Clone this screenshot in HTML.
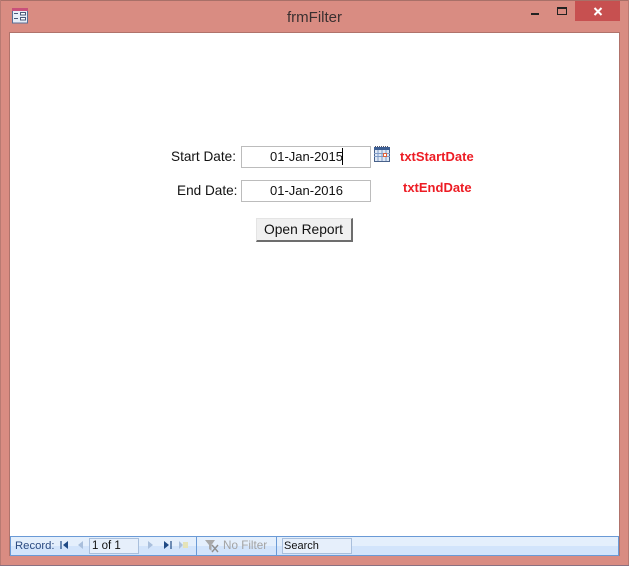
<!DOCTYPE html>
<html>
<head>
<meta charset="utf-8">
<style>
html,body{margin:0;padding:0;}
body{width:629px;height:566px;position:relative;overflow:hidden;background:#d98c82;font-family:"Liberation Sans",sans-serif;}
.a{position:absolute;}
.t{position:absolute;white-space:nowrap;line-height:16px;}
.lab{font-size:13.6px;color:#111;}
.inp{position:absolute;background:#fff;border:1px solid #bcbcbc;box-sizing:border-box;width:130px;height:22px;left:241px;}
.val{font-size:13px;color:#111;}
.red{font-size:13px;font-weight:bold;color:#ed1c24;}
</style>
</head>
<body>
<div class="a" style="left:0;top:0;width:629px;height:1px;background:#a87068"></div>
<div class="a" style="left:0;top:0;width:1px;height:566px;background:#b87a72"></div>
<div class="a" style="left:628px;top:0;width:1px;height:566px;background:#b87a72"></div>
<div class="a" style="left:0;top:565px;width:629px;height:1px;background:#8a7080"></div>

<!-- title icon -->
<svg class="a" style="left:12px;top:8px" width="16" height="16" viewBox="0 0 16 16">
<rect x="0.5" y="0.5" width="15" height="14.5" fill="#e8eef8" stroke="#5a6f96"/>
<rect x="0" y="0" width="16" height="3" fill="#c9507a"/>
<path d="M2 5.5h4M2 10.5h4" stroke="#4a5a7a" stroke-width="1"/>
<rect x="8.5" y="4.5" width="5" height="2.5" fill="#fff" stroke="#4a5a7a"/>
<rect x="8.5" y="9.5" width="5" height="2.5" fill="#fff" stroke="#4a5a7a"/>
</svg>
<div class="t" style="left:0;width:629px;text-align:center;top:10px;font-size:15px;color:#3a3030;">frmFilter</div>

<!-- window buttons -->
<div class="a" style="left:531px;top:13px;width:8px;height:2px;background:#222"></div>
<div class="a" style="left:557px;top:7px;width:10px;height:8px;box-sizing:border-box;border:1px solid #222;border-top-width:2px;"></div>
<div class="a" style="left:575px;top:1px;width:45px;height:20px;background:#c75050"></div>
<svg class="a" style="left:593px;top:7px" width="10" height="9" viewBox="0 0 10 9">
<path d="M1.5 1L8.5 8M8.5 1L1.5 8" stroke="#fff" stroke-width="2"/>
</svg>

<!-- client -->
<div class="a" style="left:9px;top:32px;width:611px;height:1px;background:#b0736b"></div>
<div class="a" style="left:9px;top:32px;width:1px;height:524px;background:#b0736b"></div>
<div class="a" style="left:619px;top:32px;width:1px;height:524px;background:#b0736b"></div>
<div class="a" style="left:10px;top:33px;width:609px;height:503px;background:#fff"></div>

<div class="t lab" style="left:171px;top:149px;">Start Date:</div>
<div class="inp" style="top:146px;"></div>
<div class="t val" style="left:270px;top:149px;">01-Jan-2015</div>
<div class="a" style="left:342px;top:148px;width:1px;height:17px;background:#000"></div>

<svg class="a" style="left:374px;top:146px" width="16" height="16" viewBox="0 0 16 16">
<rect x="0" y="1" width="16" height="14" fill="#dfe8f5"/>
<rect x="0" y="1" width="16" height="3" fill="#3d5f94"/>
<path d="M1 0.5h1M3 0.5h1M5 0.5h1M7 0.5h1M9 0.5h1M11 0.5h1M13 0.5h1" stroke="#556" stroke-width="1"/>
<path d="M0.5 4V15.5H15.5V4" fill="none" stroke="#48618a"/>
<path d="M4 4v11M8 4v11M12 4v11M0 7.5h16M0 10.5h16" stroke="#7f9bc7" stroke-width="1"/>
<rect x="9.5" y="7.5" width="3" height="3" fill="#fff" stroke="#e0603a"/>
</svg>
<div class="t red" style="left:400px;top:149px;">txtStartDate</div>

<div class="t lab" style="left:177px;top:183px;">End Date:</div>
<div class="inp" style="top:180px;"></div>
<div class="t val" style="left:270px;top:183px;">01-Jan-2016</div>
<div class="t red" style="left:403px;top:180px;">txtEndDate</div>

<!-- button -->
<div class="a" style="left:256px;top:218px;width:97px;height:24px;box-sizing:border-box;background:#f0f0f0;border-top:1px solid #e4e4e4;border-left:1px solid #e4e4e4;border-right:2px solid #6d6d6d;border-bottom:2px solid #6d6d6d;"></div>
<div class="t" style="left:264px;top:222px;font-size:13.8px;color:#111;">Open Report</div>

<!-- nav bar -->
<div class="a" style="left:10px;top:536px;width:609px;height:20px;box-sizing:border-box;border:1px solid #6a9ad6;background:linear-gradient(#e4effc 0,#e4effc 9px,#d2e4fb 9px,#d2e4fb 100%);"></div>
<div class="a" style="left:196px;top:537px;width:1px;height:18px;background:#6a9ad6"></div>
<div class="a" style="left:276px;top:537px;width:1px;height:18px;background:#6a9ad6"></div>
<div class="t" style="left:15px;top:538px;font-size:11.3px;color:#2a4a80;">Record:</div>
<svg class="a" style="left:58px;top:539px" width="130" height="13" viewBox="0 0 130 13">
<path d="M3 2v8" stroke="#1f4a85" stroke-width="1.2"/><path d="M10 2L5 6L10 10Z" fill="#1f4a85"/>
<path d="M25 2L20 6L25 10Z" fill="#a9bfdc"/>
<path d="M90 2L95 6L90 10Z" fill="#a9bfdc"/>
<path d="M106 2L111 6L106 10Z" fill="#1f4a85"/><path d="M113 2v8" stroke="#1f4a85" stroke-width="1.2"/>
<path d="M121 2L125 6L121 10Z" fill="#a9bfdc"/>
<rect x="125" y="3" width="5" height="6" fill="#e5e3b8"/>
</svg>
<div class="a" style="left:89px;top:538px;width:50px;height:16px;box-sizing:border-box;background:#e6effb;border:1px solid #a9bfdc;"></div>
<div class="t" style="left:92px;top:538px;font-size:11.5px;color:#111;">1 of 1</div>

<svg class="a" style="left:204px;top:539px" width="16" height="14" viewBox="0 0 16 14">
<path d="M1 1h10L7.5 6v6L5 10V6Z" fill="#a8a8a8"/>
<path d="M8 6l6 7M14 6l-6 7" stroke="#8f8f8f" stroke-width="1.4"/>
</svg>
<div class="t" style="left:223px;top:538px;font-size:11.7px;color:#a3a3a3;">No Filter</div>

<div class="a" style="left:282px;top:538px;width:70px;height:16px;box-sizing:border-box;background:#e6effb;border:1px solid #a9bfdc;"></div>
<div class="t" style="left:284px;top:538px;font-size:11px;color:#111;">Search</div>
</body>
</html>
